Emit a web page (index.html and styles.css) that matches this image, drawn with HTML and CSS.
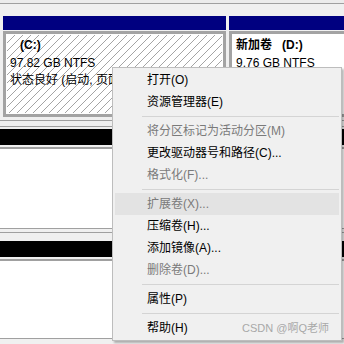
FILE: index.html
```html
<html>
  <head>
    <meta charset="utf-8" />
    <link rel="stylesheet" href="styles.css">
  </head>
  <body>
    <div class="top-edge"></div>

    <div class="disk disk-basic">
      <div class="parts">
        <div class="part part-c">
          <div class="bar"></div>
          <div class="box">
            <div class="hatch">
              <p class="label label-c">(C:)</p>
              <p>97.82 GB NTFS</p>
              <p>状态良好 (启动, 页面文件, 故障转储, 主分区)</p>
            </div>
          </div>
        </div>
        <div class="part part-d">
          <div class="bar"></div>
          <div class="box">
            <div class="plain">
              <p class="label">新加卷&nbsp;&nbsp;&nbsp;(D:)</p>
              <p>9.76 GB NTFS</p>
              <p>状态良好 (主分区)</p>
            </div>
          </div>
        </div>
      </div>
    </div>

    <div class="disk disk-second">
      <div class="black"></div>
      <div class="white"></div>
    </div>

    <div class="disk disk-third">
      <div class="black"></div>
      <div class="white"></div>
    </div>

    <div class="menu">
      <div class="item">打开(O)</div>
      <div class="item">资源管理器(E)</div>
      <div class="sep"></div>
      <div class="item off">将分区标记为活动分区(M)</div>
      <div class="item">更改驱动器号和路径(C)...</div>
      <div class="item off">格式化(F)...</div>
      <div class="sep"></div>
      <div class="item off hover">扩展卷(X)...</div>
      <div class="item">压缩卷(H)...</div>
      <div class="item">添加镜像(A)...</div>
      <div class="item off">删除卷(D)...</div>
      <div class="sep"></div>
      <div class="item">属性(P)</div>
      <div class="sep"></div>
      <div class="item">帮助(H)</div>
    </div>

    <div class="watermark">CSDN @啊Q老师</div>
  </body>
</html>
```

FILE: styles.css
```css
body {
  margin: 0;
  width: 344px;
  height: 344px;
  overflow: hidden;
  position: relative;
  background: #f0f0f0;
  font-family: "Liberation Sans", "Noto Sans CJK SC", sans-serif;
  font-size: 12px;
  color: #000;
}
p {
  margin: 0;
  white-space: nowrap;
}

/* disk rows */
.top-edge {
  height: 3px;
  background: #ececec;
  border-bottom: 1px solid #a0a0a0;
}
.disk-basic {
  padding-top: 12px;
  padding-bottom: 3px;
  border-bottom: 1px solid #a0a0a0;
}
.parts {
  display: flex;
}
.part {
  margin-left: 3px;
}
.part-c {
  width: 223px;
}
.part-d {
  flex: 1;
}
.bar {
  height: 14px;
  background: #000080;
}
.box {
  margin-top: 1px;
  height: 86px;
  box-sizing: border-box;
  border: 3px solid #a3a3a3;
  padding: 1px;
  background: #fff;
  overflow: hidden;
}
.part-d .box {
  border-right: 0;
}
.hatch, .plain {
  height: 100%;
  box-sizing: border-box;
  padding: 2px 3px;
  line-height: 17.5px;
  overflow: hidden;
}
.plain {
  padding-left: 3px;
}
.hatch {
  background-color: #fff;
  background-image: url("data:image/svg+xml,%3Csvg xmlns='http://www.w3.org/2000/svg' width='8' height='8'%3E%3Cpath d='M-1 9L9 -1' stroke='%23a4a4a4' stroke-width='1'/%3E%3C/svg%3E");
}
.label {
  font-weight: 700;
}
.label-c {
  padding-left: 10px;
}

.disk-second {
  margin-top: 5px;
  border-top: 1px solid #a0a0a0;
  padding-top: 2px;
}
.disk-third {
  margin-top: 3px;
  border-top: 1px solid #a0a0a0;
  padding-top: 8px;
}
.black {
  height: 16px;
  background: #000;
  margin-bottom: 2px;
}
.white {
  background: #fff;
  border-top: 2px solid #a0a0a0;
  border-bottom: 1px solid #a0a0a0;
}
.disk-second .white {
  height: 79px;
}
.disk-third .white {
  height: 77px;
}

/* context menu */
.menu {
  position: absolute;
  left: 112px;
  top: 67px;
  width: 230px;
  box-sizing: border-box;
  background: #f0f0f0;
  border: 1px solid #bdbdbd;
  padding: 1px 0;
  box-shadow: 2px 2px 2px rgba(0, 0, 0, 0.28);
}
.item {
  height: 22px;
  line-height: 22px;
  margin: 0 2px;
  padding-left: 32px;
  white-space: nowrap;
}
.item.off {
  color: #7a7a7a;
}
.item.hover {
  background: #e3e3e3;
}
.sep {
  height: 1px;
  margin: 3px 2px 3px 29px;
  background: #d4d4d4;
}
.watermark {
  position: absolute;
  left: 242px;
  top: 320px;
  font-size: 11px;
  line-height: 16px;
  color: #a8a8a8;
  white-space: nowrap;
}
```
